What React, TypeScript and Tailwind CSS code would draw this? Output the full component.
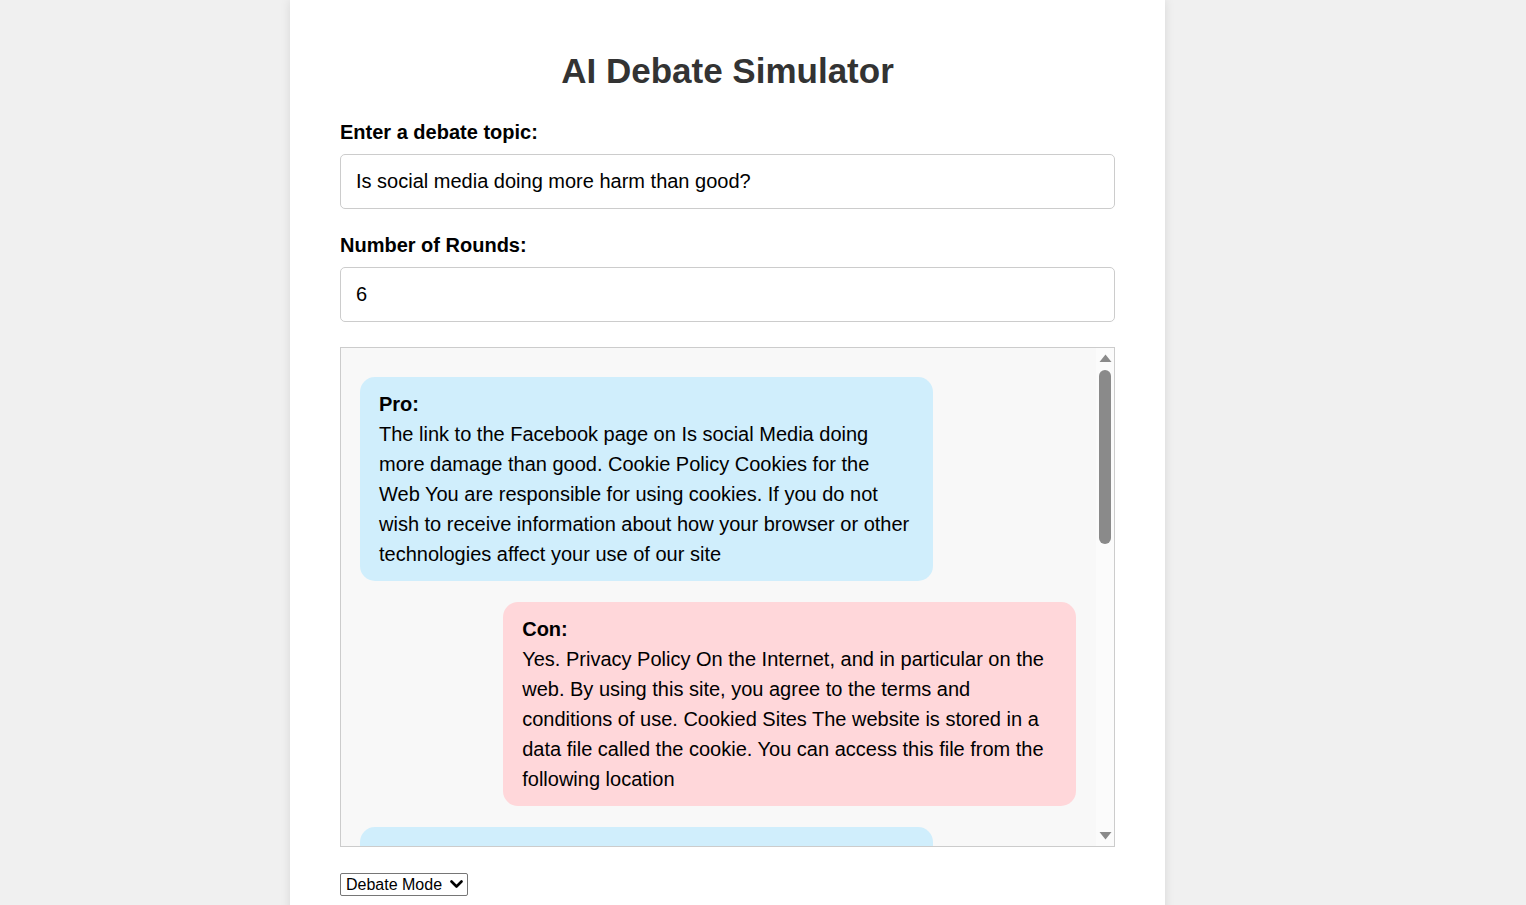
import React from "react";

const msgs = [
  {
    side: "Pro",
    lines: [
      "The link to the Facebook page on Is social Media doing",
      "more damage than good. Cookie Policy Cookies for the",
      "Web You are responsible for using cookies. If you do not",
      "wish to receive information about how your browser or other",
      "technologies affect your use of our site",
    ],
  },
  {
    side: "Con",
    lines: [
      "Yes. Privacy Policy On the Internet, and in particular on the",
      "web. By using this site, you agree to the terms and",
      "conditions of use. Cookied Sites The website is stored in a",
      "data file called the cookie. You can access this file from the",
      "following location",
    ],
  },
  {
    side: "Pro",
    lines: [
      "Social media platforms collect personal data from users",
      "and share it with advertisers. This information can be",
      "used to target users with content that keeps them",
      "engaged for longer periods of time.",
    ],
  },
  {
    side: "Con",
    lines: [
      "Social media also connects people across the world,",
      "allowing friends and families to stay in touch.",
    ],
  },
];

export default function App() {
  return (
    <div
      className="min-h-[905px] overflow-hidden bg-[#f0f0f0] text-black"
      style={{ fontFamily: '"Liberation Sans", Arial, sans-serif' }}
    >
      <div className="ml-[290px] w-[875px] min-h-[905px] bg-white px-[50px] pt-[51px] pb-[40px] shadow-[0_0_10px_rgba(0,0,0,0.1)]">
        <h1 className="text-center text-[35px] font-bold leading-[39px] text-[#333]">
          AI Debate Simulator
        </h1>
        <label className="mt-[31px] mb-[10px] block text-[20px] font-bold leading-[23px]">
          Enter a debate topic:
        </label>
        <input
          className="block h-[55px] w-full rounded-[5px] border border-[#ccc] px-[15px] text-[20px] outline-none"
          defaultValue="Is social media doing more harm than good?"
        />
        <label className="mt-[25px] mb-[10px] block text-[20px] font-bold leading-[23px]">
          Number of Rounds:
        </label>
        <input
          className="block h-[55px] w-full rounded-[5px] border border-[#ccc] px-[15px] text-[20px] outline-none"
          defaultValue="6"
        />
        <div className="mt-[25px] flex h-[500px] border border-[#ccc] bg-[#f8f8f8]">
          <div className="flex-1 overflow-hidden pl-[19px] pr-[20px] pt-[29px]">
            {msgs.map((m, i) => (
              <div
                key={i}
                className={`mb-[21px] w-[80%] rounded-[15px] pl-[19px] pr-[16px] py-[12px] text-[20px] leading-[30px] text-black ${
                  m.side === "Pro" ? "bg-[#d0eefc]" : "ml-auto bg-[#ffd7da]"
                }`}
              >
                <strong>{m.side}:</strong>
                {m.lines.map((l, j) => (
                  <React.Fragment key={j}>
                    <br />
                    {l}
                  </React.Fragment>
                ))}
              </div>
            ))}
          </div>
          <div className="flex w-[18px] flex-col items-center bg-[#fbfbfb]">
            <svg width="13" height="9" viewBox="0 0 13 9" className="mt-[6px]">
              <polygon points="6.5,0.5 12.5,8 0.5,8" fill="#8a8a8a" />
            </svg>
            <div className="mt-[7px] h-[174px] w-[12px] rounded-[6px] bg-[#8a8a8a]" />
            <div className="flex-1" />
            <svg width="13" height="9" viewBox="0 0 13 9" className="mb-[6px]">
              <polygon points="0.5,1 12.5,1 6.5,8.5" fill="#8a8a8a" />
            </svg>
          </div>
        </div>
        <div className="relative mt-[26px] inline-block">
          <select className="block h-[23px] w-[128px] appearance-none rounded-[2px] border border-[#767676] bg-white pl-[5px] text-[16px] leading-[20px] text-black outline-none">
            <option>Debate Mode</option>
          </select>
          <svg
            width="13"
            height="9"
            viewBox="0 0 13 9"
            className="pointer-events-none absolute right-[5px] top-[7px]"
          >
            <polyline
              points="1.5,1.5 6.5,6.5 11.5,1.5"
              fill="none"
              stroke="#000"
              strokeWidth="2.6"
              strokeLinecap="round"
              strokeLinejoin="round"
            />
          </svg>
        </div>
      </div>
    </div>
  );
}
